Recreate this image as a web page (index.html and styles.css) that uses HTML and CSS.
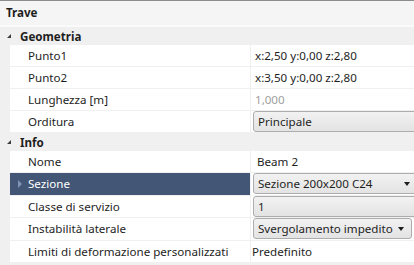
FILE: index.html
```html
<!DOCTYPE html>
<html lang="it">

<head>
    <meta charset="UTF-8">
    <meta name="viewport" content="width=device-width, initial-scale=1.0">
    <title>Trave</title>
    <link rel="stylesheet" href="styles.css">
</head>

<body>
    <div class="panel">
        <header class="title">Trave</header>

        <div class="category">
            <span class="toggle"></span>
            <span class="cat-name">Geometria</span>
        </div>
        <div class="row">
            <div class="label">Punto1</div>
            <div class="value">x:2,50 y:0,00 z:2,80</div>
        </div>
        <div class="row">
            <div class="label">Punto2</div>
            <div class="value">x:3,50 y:0,00 z:2,80</div>
        </div>
        <div class="row">
            <div class="label">Lunghezza [m]</div>
            <div class="value readonly">1,000</div>
        </div>
        <div class="row">
            <div class="label">Orditura</div>
            <div class="value">
                <div class="combo">Principale</div>
            </div>
        </div>

        <div class="category">
            <span class="toggle"></span>
            <span class="cat-name">Info</span>
        </div>
        <div class="row">
            <div class="label">Nome</div>
            <div class="value name">Beam 2</div>
        </div>
        <div class="row tall selected">
            <div class="label"><span class="marker"></span>Sezione</div>
            <div class="value">
                <div class="combo">Sezione 200x200 C24<span class="arrow"></span></div>
            </div>
        </div>
        <div class="row">
            <div class="label">Classe di servizio</div>
            <div class="value">
                <div class="combo">1</div>
            </div>
        </div>
        <div class="row tall">
            <div class="label">Instabilità laterale</div>
            <div class="value">
                <div class="combo short">Svergolamento impedito<span class="arrow"></span></div>
            </div>
        </div>
        <div class="row">
            <div class="label">Limiti di deformazione personalizzati</div>
            <div class="value plain">Predefinito</div>
        </div>
    </div>
</body>

</html>
```

FILE: styles.css
```css
body {
    margin: 0;
    padding: 0;
    font-family: "Noto Sans", "Open Sans", sans-serif;
    font-size: 11.6px;
    color: #1e1e1e;
    background: #f0f0f0;
    overflow: hidden;
}

.panel {
    width: 414px;
    height: 265px;
    background: #f0f0f0;
    border-top: 1px solid #8c8c8c;
}

.title {
    height: 24px;
    line-height: 23px;
    padding-left: 6px;
    font-weight: bold;
    background: #f5f5f5;
    border-bottom: 2px solid #fafafa;
}

.category {
    display: flex;
    align-items: center;
    height: 18px;
    background: #f0f0f0;
}

.toggle {
    width: 0;
    height: 0;
    margin-left: 7px;
    margin-right: 9px;
    border-left: 4px solid transparent;
    border-bottom: 4px solid #3c3c3c;
}

.cat-name {
    font-weight: bold;
}

.row {
    display: flex;
    height: 22px;
    margin-left: 10px;
    background: #fff;
    border-bottom: 1px solid #f0f0f0;
    box-sizing: border-box;
}

.row.tall {
    height: 23px;
}

.label {
    position: relative;
    flex: 0 0 241px;
    line-height: 21px;
    padding-left: 18px;
    box-sizing: border-box;
    border-right: 1px solid #f0f0f0;
    white-space: nowrap;
    overflow: hidden;
}

.tall .label {
    line-height: 22px;
}

.value {
    flex: 1;
    line-height: 21px;
    padding-left: 4px;
    white-space: nowrap;
    overflow: hidden;
}

.value.readonly {
    color: #a0a0a0;
}

.value.name {
    padding-left: 6px;
}

.value.plain {
    padding-left: 1px;
}

.selected .label {
    background: #435675;
    color: #fff;
}

.marker {
    position: absolute;
    left: 8px;
    top: 7px;
    width: 0;
    height: 0;
    border-top: 4px solid transparent;
    border-bottom: 4px solid transparent;
    border-left: 4px solid #7f93b8;
}

.combo {
    position: relative;
    height: 21px;
    margin: 0 -4px 0 -2px;
    padding-left: 4px;
    line-height: 19px;
    box-sizing: border-box;
    border: 1px solid #adadad;
    border-radius: 3px;
    background: linear-gradient(#f2f2f2, #e3e3e3);
}

.selected .value {
    background: #fff;
}

.arrow {
    position: absolute;
    right: 7px;
    top: 8px;
    width: 0;
    height: 0;
    border-left: 3px solid transparent;
    border-right: 3px solid transparent;
    border-top: 4px solid #1e1e1e;
}

.combo.short {
    margin-right: 2px;
}
```
